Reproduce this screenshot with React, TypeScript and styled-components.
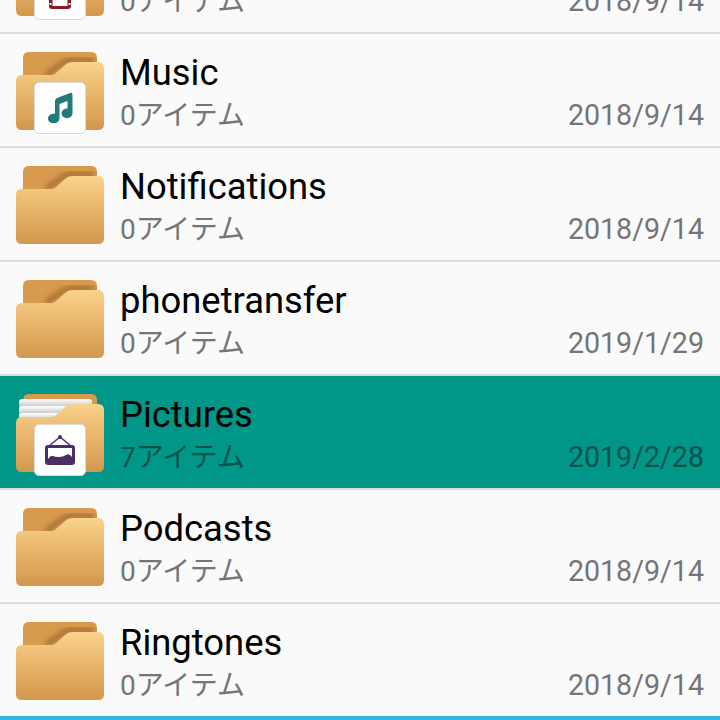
import React from "react";
import styled, { createGlobalStyle } from "styled-components";

const GlobalStyle = createGlobalStyle`
    html, body {
        margin: 0;
        padding: 0;
        background: #fafafa;
    }
`;

const Screen = styled.div`
    width: 720px;
    height: 720px;
    display: flex;
    flex-direction: column;
    overflow: hidden;
    background: #fafafa;
    font-family: Roboto, "Noto Sans CJK JP", sans-serif;
`;

const List = styled.ul`
    flex: 1;
    min-height: 0;
    margin: 0;
    padding: 0;
    list-style: none;
    overflow: hidden;
`;

const FirstRowClip = styled.div`
    margin-top: -80px;
`;

const BottomBar = styled.div`
    height: 4px;
    flex-shrink: 0;
    background: #33b5e5;
`;

const Row = styled.li<{ $active?: boolean }>`
    height: 112px;
    display: flex;
    align-items: flex-start;
    padding-left: 16px;
    padding-right: 16px;
    background: ${(props) => (props.$active ? "#009688" : "#fafafa")};
    border-bottom: 2px solid #dcdcdc;
`;

const IconBox = styled.div`
    position: relative;
    width: 88px;
    height: 78px;
    margin-top: 18px;
    flex-shrink: 0;
`;

const FolderSvg = styled.svg`
    display: block;
`;

const Badge = styled.div`
    position: absolute;
    left: 18px;
    top: 30px;
    width: 52px;
    height: 52px;
    box-sizing: border-box;
    background: #fff;
    border: 1px solid #dadada;
    border-radius: 5px;
    svg {
        display: block;
        margin: -1px;
    }
`;

const Body = styled.div`
    flex: 1;
    margin-left: 16px;
    padding-top: 19px;
    min-width: 0;
`;

const Title = styled.div`
    font-size: 36.4px;
    line-height: 40px;
    color: #000;
`;

const Meta = styled.div<{ $active?: boolean }>`
    display: flex;
    justify-content: space-between;
    align-items: baseline;
    margin-top: 4px;
    font-size: 28px;
    line-height: 36px;
    color: ${(props) => (props.$active ? "#07544a" : "#757575")};
`;

const DateText = styled.span`
    font-size: 28.6px;
`;

type BadgeKind = "movie" | "music" | "picture";

interface IFolder {
    name: string;
    count: number;
    date: string;
    badge?: BadgeKind;
    active?: boolean;
    papers?: boolean;
}

const folders: IFolder[] = [
    { name: "Movies", count: 0, date: "2018/9/14", badge: "movie" },
    { name: "Music", count: 0, date: "2018/9/14", badge: "music" },
    { name: "Notifications", count: 0, date: "2018/9/14" },
    { name: "phonetransfer", count: 0, date: "2019/1/29" },
    { name: "Pictures", count: 7, date: "2019/2/28", badge: "picture", active: true, papers: true },
    { name: "Podcasts", count: 0, date: "2018/9/14" },
    { name: "Ringtones", count: 0, date: "2018/9/14" },
];

const frontPath = "M0 29Q0 23 6 23H35Q38 23 40 21L49 13Q52 10 56 10H82Q88 10 88 16V72Q88 78 82 78H6Q0 78 0 72Z";

function Folder({ id, papers }: { id: string; papers?: boolean }) {
    return (
        <FolderSvg width="88" height="78" viewBox="0 0 88 78">
            <defs>
                <linearGradient id={`front-${id}`} x1="0" y1="0" x2="0" y2="1">
                    <stop offset="0" stopColor="#fad28c" />
                    <stop offset="0.4" stopColor="#ebba71" />
                    <stop offset="1" stopColor="#d2984c" />
                </linearGradient>
                <linearGradient id={`paper-${id}`} x1="0" y1="0" x2="0" y2="1">
                    <stop offset="0" stopColor="#ffffff" />
                    <stop offset="1" stopColor="#c4c4c4" />
                </linearGradient>
                <filter id={`blur-${id}`} x="-20%" y="-20%" width="140%" height="140%">
                    <feGaussianBlur stdDeviation="2.5" />
                </filter>
                <clipPath id={`back-${id}`}>
                    <path d="M7 30V6Q7 0 13 0H75Q81 0 81 6V30Z" />
                </clipPath>
            </defs>
            <path d="M7 30V6Q7 0 13 0H75Q81 0 81 6V30Z" fill="#d89a4d" />
            {!papers && (
                <g clipPath={`url(#back-${id})`}>
                    <path d="M30 23L47 11Q50 8 56 8H78" fill="none" stroke="#9c6632" strokeWidth="6" filter={`url(#blur-${id})`} opacity="0.75" />
                </g>
            )}
            {papers && (
                <g>
                    <rect x="3" y="5" width="73" height="8" rx="3" fill={`url(#paper-${id})`} />
                    <rect x="3" y="12" width="73" height="8" rx="2" fill={`url(#paper-${id})`} />
                    <rect x="3" y="19" width="73" height="8" rx="2" fill={`url(#paper-${id})`} />
                </g>
            )}
            <path d={frontPath} fill={`url(#front-${id})`} />
        </FolderSvg>
    );
}

function BadgeIcon({ kind }: { kind: BadgeKind }) {
    if (kind === "music") {
        return (
            <svg width="52" height="52" viewBox="0 0 52 52">
                <path
                    d="M21 19Q21 17 23 16L36 11Q38.500 10 38.500 13V31A5.500 4.800 0 1 1 33.500 26.600V19L25.500 22V36A5.800 4.800 0 1 1 21 31.800Z"
                    fill="#237a7d"
                />
            </svg>
        );
    }
    if (kind === "picture") {
        return (
            <svg width="52" height="52" viewBox="0 0 52 52">
                <circle cx="26" cy="13" r="2" fill="#4a2f66" />
                <path d="M15 22L26 13L37 22" fill="none" stroke="#4a2f66" strokeWidth="1.4" />
                <rect x="11" y="21" width="30" height="20" rx="3" fill="#4a2f66" />
                <path d="M14 24H38V33Q35 29 32 31T25 33T19 32T14 35Z" fill="#fff" />
            </svg>
        );
    }
    return (
        <svg width="52" height="52" viewBox="0 0 52 52">
            <rect x="15" y="14" width="22" height="27" rx="3" fill="#8b1c26" />
            <rect x="18.5" y="17" width="15" height="21" fill="#fff" />
            <rect x="15.5" y="35" width="2" height="2" fill="#fff" />
            <rect x="34.5" y="35" width="2" height="2" fill="#fff" />
        </svg>
    );
}

function App() {
    return (
        <Screen>
            <GlobalStyle />
            <List>
                <FirstRowClip>
                    {folders.map((folder) => (
                        <Row key={folder.name} $active={folder.active}>
                            <IconBox>
                                <Folder id={folder.name} papers={folder.papers} />
                                {folder.badge && (
                                    <Badge>
                                        <BadgeIcon kind={folder.badge} />
                                    </Badge>
                                )}
                            </IconBox>
                            <Body>
                                <Title>{folder.name}</Title>
                                <Meta $active={folder.active}>
                                    <span>{folder.count}アイテム</span>
                                    <DateText>{folder.date}</DateText>
                                </Meta>
                            </Body>
                        </Row>
                    ))}
                </FirstRowClip>
            </List>
            <BottomBar />
        </Screen>
    );
}

export default App;
